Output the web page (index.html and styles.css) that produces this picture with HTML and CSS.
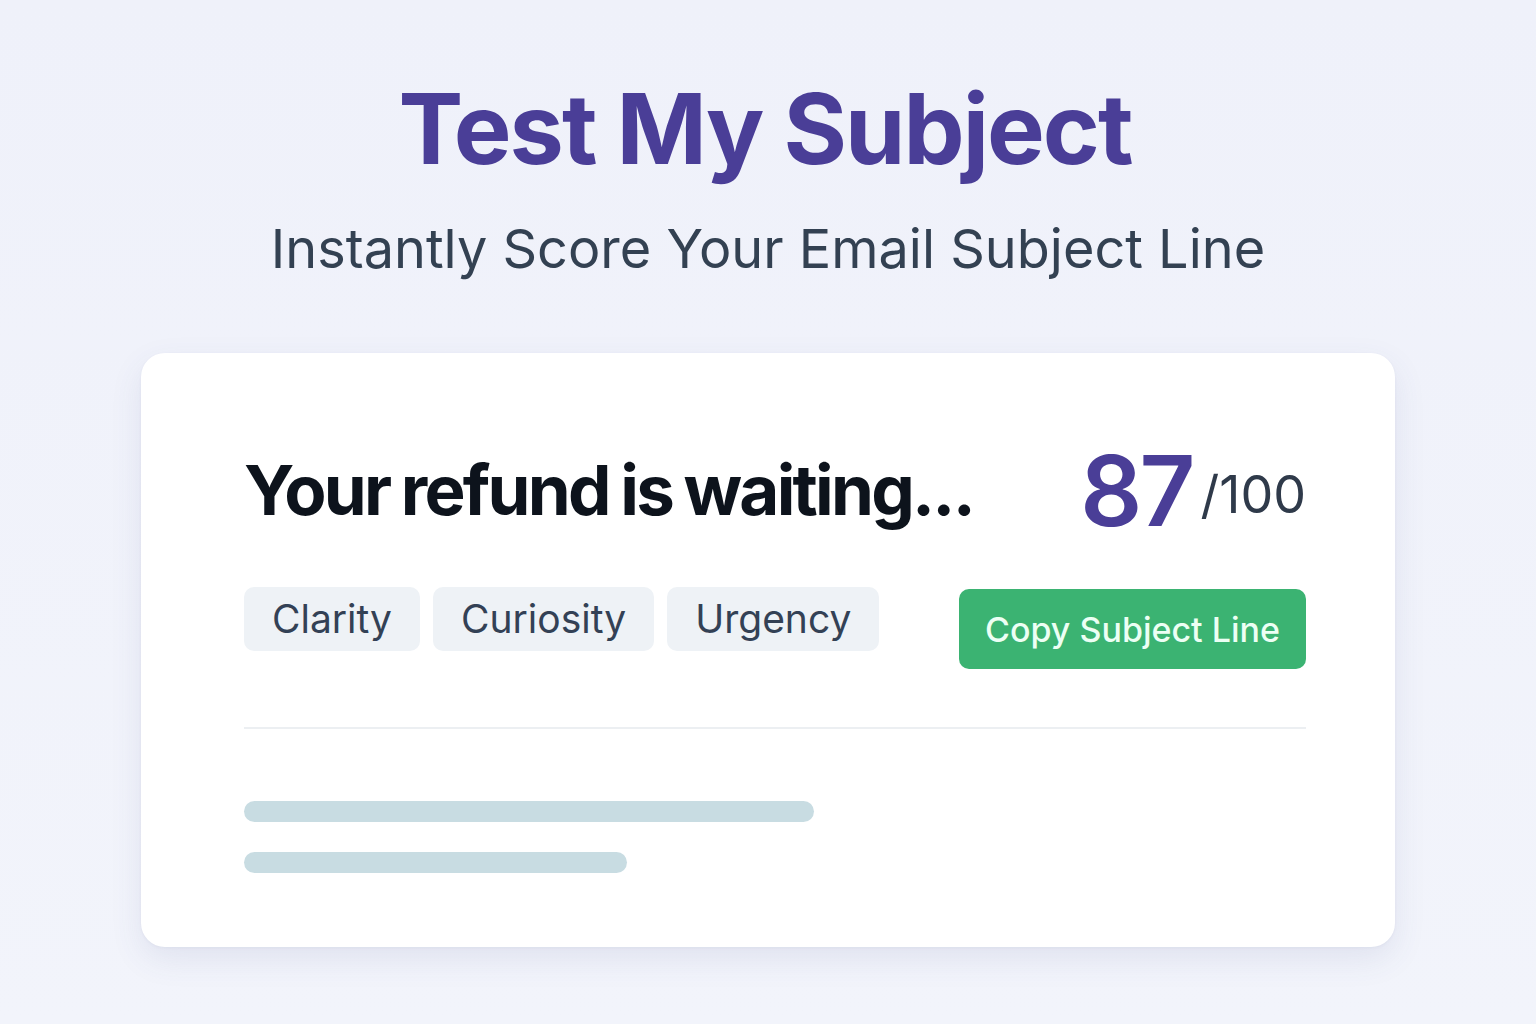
FILE: index.html
```html
<!DOCTYPE html>
<html lang="en">
<head>
    <meta charset="UTF-8">
    <meta name="viewport" content="width=device-width, initial-scale=1.0">
    <title>Test My Subject</title>
    <link rel="stylesheet" href="styles.css">
</head>
<body>
    <header class="hero">
        <h1 class="hero-title">Test My Subject</h1>
        <p class="hero-sub">Instantly Score Your Email Subject Line</p>
    </header>

    <main class="card">
        <!-- subject line + score -->
        <div class="subject-row">
            <h2 class="subject">Your refund is waiting...</h2>
            <div class="score">
                <span class="score-num">87</span>
                <span class="score-max">/100</span>
            </div>
        </div>

        <div class="tag-row">
            <ul class="tags">
                <li class="tag">Clarity</li>
                <li class="tag">Curiosity</li>
                <li class="tag">Urgency</li>
            </ul>
            <button class="copy-btn" type="button">Copy Subject Line</button>
        </div>

        <hr class="divider">

        <!-- placeholder lines -->
        <div class="skeleton">
            <div class="skeleton-line" style="width: 570px;"></div>
            <div class="skeleton-line" style="width: 383px;"></div>
        </div>
    </main>
</body>
</html>
```

FILE: styles.css
```css
* {
    box-sizing: border-box;
}
body {
    margin: 0;
    min-height: 1024px;
    background: linear-gradient(180deg, #eff1fa 0%, #f2f4fb 100%);
    font-family: "Inter", "Liberation Sans", sans-serif;
    color: #334155;
}
.hero {
    text-align: center;
    padding-top: 80px;
}
.hero-title {
    margin: 0 0 0 -6px;
    font-size: 97px;
    line-height: 1;
    font-weight: 700;
    letter-spacing: -0.02em;
    color: #4a3e97;
}
.hero-sub {
    margin: 45px 0 0;
    font-size: 54px;
    line-height: 1;
    font-weight: 400;
    color: #334152;
}
.card {
    width: 1254px;
    margin: 77px auto 0;
    padding: 89px 89px 74px 103px;
    background: #fff;
    border-radius: 24px;
    box-shadow: 0 12px 32px rgba(70, 80, 140, 0.10), 0 1px 3px rgba(70, 80, 140, 0.06);
}
.subject-row {
    display: flex;
    align-items: center;
    justify-content: space-between;
}
.subject {
    margin: 0;
    font-size: 69px;
    line-height: 1;
    font-weight: 700;
    letter-spacing: -0.04em;
    word-spacing: -2px;
    color: #0d131c;
}
.score {
    display: flex;
    align-items: center;
    gap: 8px;
}
.score-num {
    font-size: 97px;
    line-height: 1;
    font-weight: 600;
    letter-spacing: -0.03em;
    color: #4a3e97;
}
.score-max {
    font-size: 52px;
    line-height: 1;
    font-weight: 400;
    color: #2f3a4a;
    margin-top: 8px;
}
.tag-row {
    display: flex;
    align-items: flex-start;
    justify-content: space-between;
    margin-top: 48px;
}
.tags {
    display: flex;
    gap: 13px;
    margin: 0;
    padding: 0;
    list-style: none;
}
.tag {
    height: 64px;
    line-height: 64px;
    padding: 0 28px;
    font-size: 39px;
    color: #334155;
    background: #eef2f6;
    border-radius: 10px;
}
.copy-btn {
    margin-top: 2px;
    width: 347px;
    height: 80px;
    border: none;
    border-radius: 10px;
    background: #3bb372;
    color: #ecfff4;
    font-family: inherit;
    font-size: 34px;
    font-weight: 500;
}
.divider {
    margin: 58px 0 0;
    border: none;
    height: 2px;
    background: #eceff2;
}
.skeleton {
    display: flex;
    flex-direction: column;
    gap: 30px;
    margin-top: 72px;
}
.skeleton-line {
    height: 21px;
    border-radius: 11px;
    background: #c8dce2;
}
```
